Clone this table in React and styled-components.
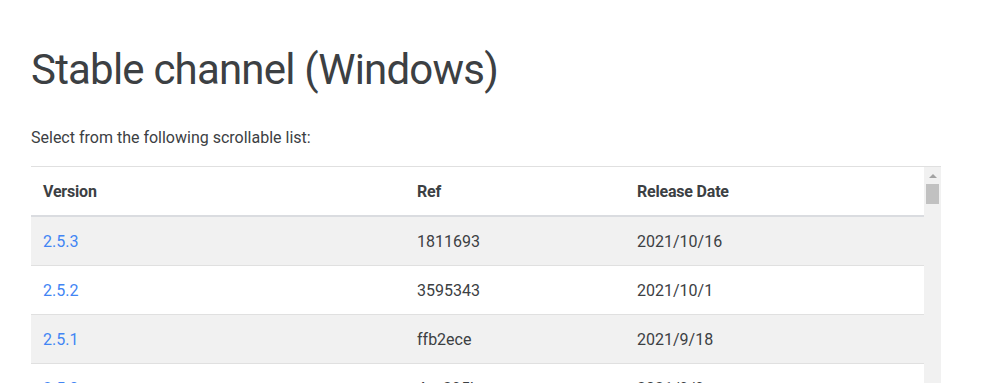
import React from "react";
import styled, { createGlobalStyle } from "styled-components";

const GlobalStyle = createGlobalStyle`
  html, body {
    margin: 0;
    padding: 0;
    background: #fff;
    overflow: hidden;
  }
  body {
    font-family: Roboto, "Liberation Sans", sans-serif;
    color: #3c4043;
  }
`;

const Page = styled.main`
  padding: 0 43px 0 31px;
`;

const Title = styled.h1`
  margin: 0;
  padding-top: 40px;
  font-family: Roboto, "Open Sans", sans-serif;
  font-weight: 400;
  font-size: 42px;
  line-height: 60px;
  letter-spacing: -0.8px;
  color: #3c4043;
`;

const Intro = styled.p`
  margin: 27px 0 17px;
  font-size: 16px;
  line-height: 22px;
  color: #3c4043;
`;

const Scroller = styled.div`
  display: flex;
  border-top: 1px solid #e0e0e0;
  width: 910px;
`;

const Table = styled.table`
  flex: 1;
  border-collapse: collapse;
  table-layout: fixed;
  font-size: 16px;
`;

const HeadCell = styled.th`
  text-align: left;
  font-weight: 700;
  height: 48px;
  padding: 0 12px;
  color: #3c4043;
  letter-spacing: -0.2px;
  border-bottom: 2px solid #dadce0;
  width: ${(p) => p.$w || "auto"};
`;

const Row = styled.tr`
  background: ${(p) => (p.$striped ? "#f1f1f1" : "#fff")};
  border-bottom: 1px solid #e0e0e0;
`;

const Cell = styled.td`
  height: 48px;
  padding: 0 12px;
  color: #3c4043;
`;

const VersionLink = styled.a`
  color: #4285f4;
  text-decoration: none;
`;

const ScrollBar = styled.div`
  width: 17px;
  background: #f1f1f1;
  display: flex;
  flex-direction: column;
  align-items: center;
`;

const Arrow = styled.div`
  margin-top: 7px;
  width: 0;
  height: 0;
  border-left: 4px solid transparent;
  border-right: 4px solid transparent;
  border-bottom: 4px solid #a3a3a3;
`;

const Thumb = styled.div`
  margin-top: 6px;
  width: 13px;
  height: 20px;
  background: #c1c1c1;
`;

const releases = [
  { version: "2.5.3", ref: "1811693", date: "2021/10/16" },
  { version: "2.5.2", ref: "3595343", date: "2021/10/1" },
  { version: "2.5.1", ref: "ffb2ece", date: "2021/9/18" },
  { version: "2.5.0", ref: "4ac295b", date: "2021/9/9" },
  { version: "2.4.9", ref: "7c1e0d2", date: "2021/8/27" },
];

export default function App() {
  return (
    <>
      <GlobalStyle />
      <Page>
        <Title>Stable channel (Windows)</Title>
        <Intro>Select from the following scrollable list:</Intro>
        <Scroller>
          <Table>
            <thead>
              <tr>
                <HeadCell $w="350px">Version</HeadCell>
                <HeadCell $w="196px">Ref</HeadCell>
                <HeadCell>Release Date</HeadCell>
              </tr>
            </thead>
            <tbody>
              {releases.map((r, i) => (
                <Row key={r.version} $striped={i % 2 === 0}>
                  <Cell>
                    <VersionLink href="#">{r.version}</VersionLink>
                  </Cell>
                  <Cell>{r.ref}</Cell>
                  <Cell>{r.date}</Cell>
                </Row>
              ))}
            </tbody>
          </Table>
          <ScrollBar>
            <Arrow />
            <Thumb />
          </ScrollBar>
        </Scroller>
      </Page>
    </>
  );
}
